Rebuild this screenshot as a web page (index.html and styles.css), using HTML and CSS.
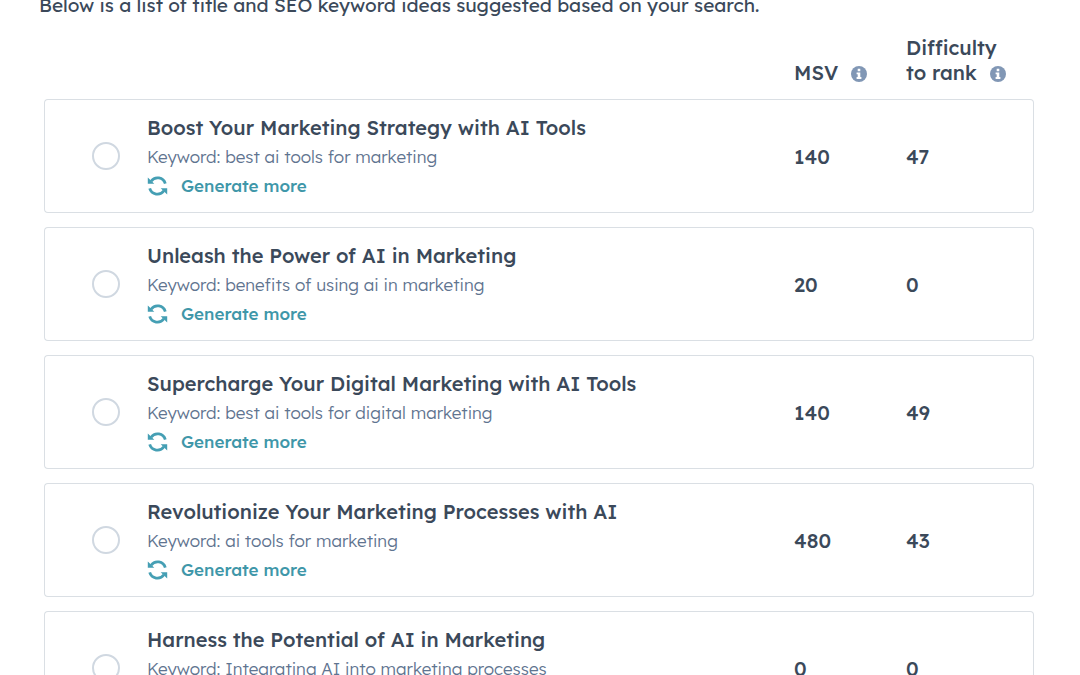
FILE: index.html
```html
<!DOCTYPE html>
<html lang="en">
<head>
<meta charset="utf-8">
<meta name="viewport" content="width=device-width, initial-scale=1">
<title>Title and keyword ideas</title>
<link rel="stylesheet" href="styles.css">
</head>
<body>
<svg class="sprite" aria-hidden="true">
  <symbol id="refresh" viewBox="0 0 20 20">
    <path d="M3.6 5.2A8 8 0 0 1 17.8 7.6M16.4 14.8A8 8 0 0 1 2.2 12.4" fill="none" stroke="currentColor" stroke-width="2.8"/>
    <path d="M0.3 1.6V7.8H6.8ZM19.7 18.4V12.2H13.2Z" fill="currentColor"/>
  </symbol>
  <symbol id="info" viewBox="0 0 16 16">
    <circle cx="8" cy="8" r="8" fill="currentColor"/>
    <path d="M6.7 2.8H9.3V5.2H6.7ZM5.6 6.4H9.3V11H10.4V13H5.6V11H6.7V8.2H5.6Z" fill="#fff"/>
  </symbol>
</svg>
<main class="page">
  <p class="intro">Below is a list of title and SEO keyword ideas suggested based on your search.</p>
  <table class="ideas">
    <thead>
      <tr>
        <td class="pick"></td>
        <td></td>
        <th class="msv" scope="col">MSV <svg class="info" role="img" aria-label="About MSV"><use href="#info"/></svg></th>
        <th class="rank" scope="col">Difficulty<br>to rank <svg class="info" role="img" aria-label="About difficulty"><use href="#info"/></svg></th>
      </tr>
    </thead>
    <tbody>
      <tr>
        <td class="pick"><input class="radio" type="radio" name="idea" id="idea1"></td>
        <td class="idea"><label class="title" for="idea1">Boost Your Marketing Strategy with AI Tools</label><span class="keyword">Keyword: best ai tools for marketing</span><button class="more" type="button"><svg class="refresh" aria-hidden="true"><use href="#refresh"/></svg>Generate more</button></td>
        <td class="value">140</td><td class="value">47</td>
      </tr>
      <tr>
        <td class="pick"><input class="radio" type="radio" name="idea" id="idea2"></td>
        <td class="idea"><label class="title" for="idea2">Unleash the Power of AI in Marketing</label><span class="keyword">Keyword: benefits of using ai in marketing</span><button class="more" type="button"><svg class="refresh" aria-hidden="true"><use href="#refresh"/></svg>Generate more</button></td>
        <td class="value">20</td><td class="value">0</td>
      </tr>
      <tr>
        <td class="pick"><input class="radio" type="radio" name="idea" id="idea3"></td>
        <td class="idea"><label class="title" for="idea3">Supercharge Your Digital Marketing with AI Tools</label><span class="keyword">Keyword: best ai tools for digital marketing</span><button class="more" type="button"><svg class="refresh" aria-hidden="true"><use href="#refresh"/></svg>Generate more</button></td>
        <td class="value">140</td><td class="value">49</td>
      </tr>
      <tr>
        <td class="pick"><input class="radio" type="radio" name="idea" id="idea4"></td>
        <td class="idea"><label class="title" for="idea4">Revolutionize Your Marketing Processes with AI</label><span class="keyword">Keyword: ai tools for marketing</span><button class="more" type="button"><svg class="refresh" aria-hidden="true"><use href="#refresh"/></svg>Generate more</button></td>
        <td class="value">480</td><td class="value">43</td>
      </tr>
      <tr>
        <td class="pick"><input class="radio" type="radio" name="idea" id="idea5"></td>
        <td class="idea"><label class="title" for="idea5">Harness the Potential of AI in Marketing</label><span class="keyword">Keyword: Integrating AI into marketing processes</span><button class="more" type="button"><svg class="refresh" aria-hidden="true"><use href="#refresh"/></svg>Generate more</button></td>
        <td class="value">0</td><td class="value">0</td>
      </tr>
    </tbody>
  </table>
</main>
</body>
</html>
```

FILE: styles.css
```css
* { box-sizing: border-box; }

body {
  margin: 0;
  background: #fff;
  color: #3b495a;
  font-family: Lexend, Inter, sans-serif;
}

.sprite { display: none; }

.page {
  height: 100vh;
  overflow: hidden;
  padding: 0 46px 0 44px;
}

.intro {
  margin: -10px 0 0 -5px;
  font-size: 19px;
  font-weight: 400;
  line-height: 31px;
}

.ideas {
  width: 100%;
  table-layout: fixed;
  border-collapse: separate;
  border-spacing: 0 14px;
}

.ideas td,
.ideas th { padding: 0; }

.ideas th {
  font-size: 20px;
  font-weight: 500;
  line-height: 25px;
  text-align: left;
  vertical-align: bottom;
}

.pick { width: 103px; }
.msv { width: 112px; }
.rank { width: 128px; }

.info {
  width: 16px;
  height: 16px;
  margin-left: 7px;
  color: #8197b5;
  vertical-align: -2px;
}

tbody td {
  border: 1px solid #dadfe4;
  border-width: 1px 0;
}

tbody td:first-child {
  border-left-width: 1px;
  border-radius: 4px 0 0 4px;
}

tbody td:last-child {
  border-right-width: 1px;
  border-radius: 0 4px 4px 0;
}

.radio {
  display: block;
  appearance: none;
  width: 28px;
  height: 28px;
  margin: 0 0 0 47px;
  border: 2px solid #d0d8e1;
  border-radius: 50%;
  background: #fff;
}

.radio:checked { border: 8px solid #3f97a9; }

.ideas .idea { padding: 13px 0 12px; }

.title,
.keyword,
.more {
  display: block;
  line-height: 29px;
}

.title {
  font-size: 20px;
  font-weight: 500;
}

.keyword {
  color: #5f7490;
  font-size: 17px;
  font-weight: 300;
}

.more {
  display: flex;
  align-items: center;
  gap: 13px;
  padding: 0;
  border: 0;
  background: none;
  color: #3f97a9;
  font-family: inherit;
  font-size: 17px;
  font-weight: 500;
}

.refresh {
  width: 21px;
  height: 20px;
  color: #459fb4;
}

.value {
  font-size: 20px;
  font-weight: 500;
}
```
